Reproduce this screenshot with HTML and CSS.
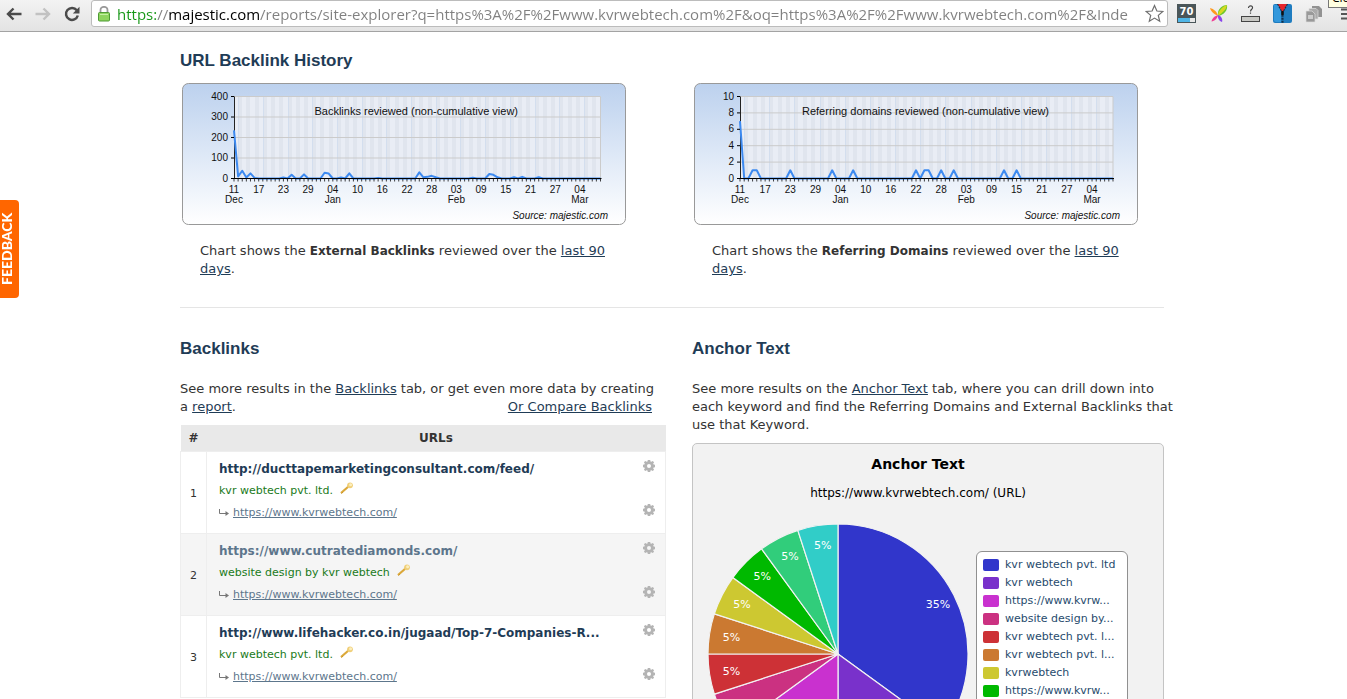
FILE: index.html
```html
<!DOCTYPE html>
<html lang="en">
<head>
<meta charset="utf-8">
<title>Site Explorer - Majestic</title>
<link rel="stylesheet" href="styles.css">
</head>
<body>
<svg class="defs" aria-hidden="true">
  <symbol id="gear" viewBox="0 0 12 12">
    <path fill="#b4b4b4" fill-rule="evenodd" d="M4.800 0h2.400l.3 1.400.9.400L9.700.9 11.100 2.300l-.9 1.300.4.900 1.400.3v2.400l-1.400.3-.4.900.9 1.300-1.400 1.400-1.300-.9-.9.400L7.200 12H4.800l-.3-1.400-.9-.4-1.300.9L.9 9.700l.9-1.300-.4-.9L0 7.200V4.800l1.400-.3.4-.9L.9 2.300 2.300.9l1.300.9.900-.4zM6 4a2 2 0 1 0 0 4 2 2 0 0 0 0-4z"/>
  </symbol>
  <symbol id="key" viewBox="0 0 14 12">
    <path d="M1 11 8.500 4.500" stroke="#dba83a" stroke-width="2.200"/>
    <path d="M1.500 11.500 3 10" stroke="#c9952c" stroke-width="1"/>
    <circle cx="10" cy="3.300" r="2.900" fill="#f0cf79"/>
    <circle cx="10.600" cy="2.800" r="1.500" fill="#fbeebd"/>
  </symbol>
  <symbol id="hook" viewBox="0 0 10 8">
    <path d="M.5 0v4.500H7" fill="none" stroke="#777"/>
    <path d="M6.500 2 10 4.500 6.500 7z" fill="#777"/>
  </symbol>
</svg>

<header class="toolbar">
  <nav class="nav">
    <button class="icon-btn" aria-label="Back"><svg width="16" height="14" viewBox="0 0 16 14"><path d="M15.500 7H2.500M7.500 1.500 2 7l5.500 5.500" fill="none" stroke="#4b4b4b" stroke-width="2.400"/></svg></button>
    <button class="icon-btn" aria-label="Forward"><svg width="16" height="14" viewBox="0 0 16 14"><path d="M.5 7h13M8.500 1.500 14 7l-5.500 5.500" fill="none" stroke="#c2c2c2" stroke-width="2.400"/></svg></button>
    <button class="icon-btn" aria-label="Reload"><svg width="16" height="16" viewBox="0 0 16 16"><path d="M12.800 4.300A6 6 0 1 0 13.800 9.500" fill="none" stroke="#4b4b4b" stroke-width="2.500"/><path d="M15.500.8V7.500H8.800z" fill="#4b4b4b"/></svg></button>
  </nav>
  <div class="omnibox">
    <svg width="12" height="16" viewBox="0 0 12 16"><path d="M2.500 8V4a3.500 3.200 0 0 1 7 0v4" fill="none" stroke="#999" stroke-width="1.800"/><rect x=".5" y="6.500" width="11" height="8.500" rx="1" fill="#8ed45e" stroke="#4f9b35"/><path d="M2 8.500h8" stroke="#c5f0a5"/></svg>
    <input class="url" type="text" aria-label="Address" value="https://majestic.com/reports/site-explorer?q=https%3A%2F%2Fwww.kvrwebtech.com%2F&amp;oq=https%3A%2F%2Fwww.kvrwebtech.com%2F&amp;Inde">
    <button class="icon-btn" aria-label="Bookmark this page"><svg width="19" height="19" viewBox="0 0 19 19"><path d="m9.500 1.500 2.400 5.500 5.900.5-4.500 3.900 1.400 5.800-5.200-3.100-5.200 3.100 1.400-5.800L1.200 7.500l5.900-.5z" fill="#fff" stroke="#6e6e6e" stroke-width="1.200"/></svg></button>
  </div>
  <div class="extensions">
    <button class="icon-btn score" aria-label="Score 70"><span>70</span></button>
    <button class="icon-btn" aria-label="Colour tool"><svg width="19" height="19" viewBox="0 0 19 19"><path d="M9 12C8 5 13 1 18 1c1 5-3 10-9 11z" fill="#6cc72c"/><path d="M9 12C9 7 13 3 18 1c-1 5-5 8-9 11z" fill="#d8d820"/><path d="M9 11.500C6 11 2 8 1 4c4 1 7 4 8 7.500z" fill="#ff9a1e"/><path d="M9 11c-3 1-6 3-6.500 6.500 3-.5 6-3 6.500-6.500z" fill="#f13c93"/><path d="M9 11c3 1 5 4 4 7-3-1-4.500-4-4-7z" fill="#8a46ec"/></svg></button>
    <button class="icon-btn" aria-label="Page rank"><svg width="19" height="17" viewBox="0 0 19 17"><path d="M7.500 3C7.500 0 12 .3 11.500 3 11.300 4.200 9.500 4.500 9.500 6.500M9.500 7.500v1.300" fill="none" stroke="#444" stroke-width="1.200"/><rect x=".5" y="11.500" width="18" height="5" fill="#c8c8c4" stroke="#444"/></svg></button>
    <button class="icon-btn" aria-label="Zip tool"><svg width="19" height="19" viewBox="0 0 19 19"><rect width="19" height="19" rx="2" fill="#1e7cc0"/><path d="M1 1h7v17H3a2 2 0 0 1-2-2z" fill="#3398dc"/><path d="M4.500 0h10L10.500 7h-2z" fill="#e5252c"/><path d="M4.500 0 9 8V19M14.500 0 10 8V19" fill="none" stroke="#12304a" stroke-width="1.100" stroke-dasharray="2 1"/><path d="M8.300 7h2.400v4H8.300z" fill="#111"/></svg></button>
    <button class="icon-btn" aria-label="Copy tool"><svg width="18" height="18" viewBox="0 0 18 18"><path d="M7 1h7l3 3v8H7z" fill="#929292"/><path d="M4 3.500h7l2 2V14H4z" fill="#aaa" stroke="#ddd" stroke-width=".7"/><path d="M1 6h6l3 3v8H1z" fill="#999" stroke="#ddd" stroke-width=".7"/><path d="M3 10h5v4H3z" fill="#ccc"/></svg></button>
    <button class="icon-btn menu" aria-label="Menu"><svg width="14" height="12" viewBox="0 0 14 12"><path d="M0 1.500h14M0 6h14M0 10.500h14" stroke="#555" stroke-width="2"/></svg></button>
  </div>
  <span class="tooltip">Close</span>
</header>

<button class="feedback">FEEDBACK</button>

<main class="viewport">
  <div class="page">
    <section class="history">
      <h2>URL Backlink History</h2>
      <div class="columns">
        <figure>
          <svg class="chart" id="backlinks-chart" viewBox="0 0 444 142" role="img" aria-label="Backlinks reviewed"></svg>
          <figcaption>Chart shows the <b>External Backlinks</b> reviewed over the <a href="#">last 90 days</a>.</figcaption>
        </figure>
        <figure>
          <svg class="chart" id="domains-chart" viewBox="0 0 444 142" role="img" aria-label="Referring domains reviewed"></svg>
          <figcaption>Chart shows the <b>Referring Domains</b> reviewed over the <a href="#">last 90 days</a>.</figcaption>
        </figure>
      </div>
    </section>

    <div class="columns lower">
      <section>
        <h2>Backlinks</h2>
        <p class="intro">See more results in the <a href="#">Backlinks</a> tab, or get even more data by creating a <a href="#">report</a>. <a class="compare" href="#">Or Compare Backlinks</a></p>
        <table class="links">
          <thead><tr><th class="num">#</th><th>URLs</th></tr></thead>
          <tbody>
            <tr><td class="num">1</td><td><div class="cell"><div class="entry"><a class="source" href="#">http://ducttapemarketingconsultant.com/feed/</a><span class="anchor">kvr webtech pvt. ltd. <svg class="key"><use href="#key"/></svg></span><span class="target"><svg class="hook"><use href="#hook"/></svg><a href="#">https://www.kvrwebtech.com/</a></span></div><div class="tools"><button class="icon-btn" aria-label="Source options"><svg class="gear"><use href="#gear"/></svg></button><button class="icon-btn" aria-label="Target options"><svg class="gear"><use href="#gear"/></svg></button></div></div></td></tr>
            <tr><td class="num">2</td><td><div class="cell"><div class="entry"><a class="source visited" href="#">https://www.cutratediamonds.com/</a><span class="anchor">website design by kvr webtech <svg class="key"><use href="#key"/></svg></span><span class="target"><svg class="hook"><use href="#hook"/></svg><a href="#">https://www.kvrwebtech.com/</a></span></div><div class="tools"><button class="icon-btn" aria-label="Source options"><svg class="gear"><use href="#gear"/></svg></button><button class="icon-btn" aria-label="Target options"><svg class="gear"><use href="#gear"/></svg></button></div></div></td></tr>
            <tr><td class="num">3</td><td><div class="cell"><div class="entry"><a class="source" href="#">http://www.lifehacker.co.in/jugaad/Top-7-Companies-R...</a><span class="anchor">kvr webtech pvt. ltd. <svg class="key"><use href="#key"/></svg></span><span class="target"><svg class="hook"><use href="#hook"/></svg><a href="#">https://www.kvrwebtech.com/</a></span></div><div class="tools"><button class="icon-btn" aria-label="Source options"><svg class="gear"><use href="#gear"/></svg></button><button class="icon-btn" aria-label="Target options"><svg class="gear"><use href="#gear"/></svg></button></div></div></td></tr>
          </tbody>
        </table>
      </section>

      <section>
        <h2>Anchor Text</h2>
        <p class="intro wide">See more results on the <a href="#">Anchor Text</a> tab, where you can drill down into each keyword and find the Referring Domains and External Backlinks that use that Keyword.</p>
        <div class="pie-card">
          <div class="pie-head">
            <h3>Anchor Text</h3>
            <p class="subtitle">https://www.kvrwebtech.com/ (URL)</p>
          </div>
          <div class="pie-row">
            <svg id="pie" width="260" height="260" viewBox="-130 -130 260 260" role="img" aria-label="Anchor text share"></svg>
            <ul class="legend" id="legend"></ul>
          </div>
        </div>
      </section>
    </div>
  </div>
</main>
<script src="charts.js"></script>
</body>
</html>
```

FILE: charts.js
```js
const NS = "http://www.w3.org/2000/svg";

function add(parent, name, attrs, text) {
  const node = document.createElementNS(NS, name);
  for (const key in attrs) node.setAttribute(key, attrs[key]);
  if (text) node.textContent = text;
  parent.appendChild(node);
  return node;
}

function drawHistory(id, o) {
  const svg = document.getElementById(id);
  const top = 13.5, bottom = 95.5, days = 89;
  const x = d => o.left + d * (o.right - o.left) / days;
  const y = v => bottom - v * (bottom - top) / o.max;
  const grad = add(add(svg, "defs", {}), "linearGradient", { id: id + "-bg", x1: 0, y1: 0, x2: 0, y2: 1 });
  add(grad, "stop", { offset: "0", "stop-color": "#bcd1ee" });
  add(grad, "stop", { offset: "1", "stop-color": "#ffffff" });
  add(svg, "rect", { x: .5, y: .5, width: 443, height: 141, rx: 6, fill: `url(#${id}-bg)`, stroke: "#999" });
  add(svg, "rect", { x: o.left, y: top, width: o.right - o.left, height: bottom - top, fill: "#e9edf5" });
  for (let d = 0; d < days - 1; d += 2) {
    const left = Math.round(x(d + 1));
    add(svg, "rect", { x: left, y: top, width: 4, height: bottom - top, fill: "#e0e5ee" });
    if (d % 6 === 0) add(svg, "rect", { x: left, y: top, width: 1, height: bottom - top, fill: "#d3deee" });
  }
  for (let v = o.step; v <= o.max; v += o.step) {
    add(svg, "path", { d: `M${o.left} ${y(v)}H${o.right}`, stroke: "#cbcbcb" });
  }
  add(svg, "path", { d: `M${o.right} ${top}V${bottom}`, stroke: "#cbcbcb" });
  add(svg, "path", { d: `M${o.left + .5} ${top}V${bottom}`, stroke: "#222" });
  let line = "";
  for (let d = 0; d <= days; d++) line += (d ? "L" : "M") + x(d) + " " + y(o.data[d] || 0);
  add(svg, "path", { d: line, fill: "none", stroke: "#3d8af0", "stroke-width": 2, "stroke-linejoin": "round" });
  add(svg, "path", { d: `M${o.left - 3} ${bottom}H${o.right + 1}`, stroke: "#000" });
  for (let d = 0; d <= days; d++) add(svg, "path", { d: `M${x(d)} ${bottom}v3`, stroke: "#111", "stroke-width": .8 });
  for (let v = 0; v <= o.max; v += o.step) {
    add(svg, "path", { d: `M${o.left - 3} ${y(v)}h3`, stroke: "#000" });
    add(svg, "text", { x: o.left - 6, y: y(v) + 3, class: "tick end" }, String(v));
  }
  "11 17 23 29 04 10 16 22 28 03 09 15 21 27 04".split(" ").forEach((label, i) =>
    add(svg, "text", { x: x(i * 6), y: 110, class: "tick mid" }, label));
  [["Dec", 0], ["Jan", 24], ["Feb", 54], ["Mar", 84]].forEach(m =>
    add(svg, "text", { x: x(m[1]), y: 120, class: "tick mid" }, m[0]));
  add(svg, "text", { x: (o.left + o.right) / 2 - 1, y: 32, class: "chart-title" }, o.title);
  add(svg, "text", { x: 426, y: 136, class: "source-note" }, "Source: majestic.com");
}

drawHistory("backlinks-chart", {
  left: 52, right: 418.5, max: 400, step: 100,
  title: "Backlinks reviewed (non-cumulative view)",
  data: { 0: 235, 1: 10, 2: 38, 3: 5, 4: 25, 5: 3, 12: 5, 14: 18, 17: 20, 22: 28, 23: 24, 26: 5, 28: 25, 35: 3, 45: 30, 46: 6, 47: 8, 48: 13, 49: 6, 58: 4, 62: 22, 63: 18, 64: 6, 68: 6, 70: 8, 74: 6 }
});
drawHistory("domains-chart", {
  left: 46, right: 419, max: 10, step: 2,
  title: "Referring domains reviewed (non-cumulative view)",
  data: { 0: 7, 3: 1, 4: 1, 12: 1, 22: 1, 27: 1, 42: 1, 44: 1, 45: 1, 48: 1, 51: 1, 63: 1, 66: 1 }
});

const slices = [
  ["kvr webtech pvt. ltd", 35, "#3136cb"],
  ["kvr webtech", 15, "#7931cb"],
  ["https://www.kvrw...", 15, "#c931cf"],
  ["website design by...", 5, "#cb3181"],
  ["kvr webtech pvt. l...", 5, "#cd3136"],
  ["kvr webtech pvt. l...", 5, "#cb7931"],
  ["kvrwebtech", 5, "#cdc831"],
  ["https://www.kvrw...", 5, "#00b900"],
  ["web design company", 5, "#31cd7b"],
  ["Other anchor text", 5, "#31cdc8"]
];
const pie = document.getElementById("pie");
const legend = document.getElementById("legend");
const point = (share, r) => {
  const a = share / 100 * 2 * Math.PI;
  return [Math.sin(a) * r, -Math.cos(a) * r];
};
let start = 0;
for (const [name, share, color] of slices) {
  const end = start + share;
  add(pie, "path", { d: `M0 0L${point(start, 130)}A130 130 0 0 1 ${point(end, 130)}Z`, fill: color, stroke: "#f2f2f2", "stroke-width": 1.2 });
  const [lx, ly] = point(start + share / 2, 110);
  add(pie, "text", { x: lx + 2, y: ly + 4, class: "slice-label" }, share + "%");
  start = end;
  const item = document.createElement("li");
  const swatch = document.createElement("span");
  swatch.className = "swatch";
  swatch.style.background = color;
  item.append(swatch, name);
  legend.append(item);
}
```

FILE: styles.css
```css
* { box-sizing: border-box; }
body {
  margin: 0;
  height: 100vh;
  display: flex;
  flex-direction: column;
  overflow: hidden;
  background: #fff;
  color: #333;
  font: 13px/18px "DejaVu Sans", Verdana, sans-serif;
}
a { color: #1f3c56; }
button { font: inherit; }
.defs { position: absolute; width: 0; height: 0; }
.icon-btn { display: flex; align-items: center; justify-content: center; padding: 0; border: 0; background: none; flex: none; }

.toolbar {
  position: relative;
  flex: none;
  display: flex;
  align-items: center;
  height: 32px;
  padding: 0 0 4px 6px;
  overflow: hidden;
  background: linear-gradient(#f3f3f3, #e3e3e3);
  border-bottom: 1px solid #a3a3a3;
}
.nav { display: flex; gap: 13px; padding-right: 11px; }
.omnibox {
  flex: 1;
  min-width: 0;
  display: flex;
  align-items: center;
  height: 27px;
  padding: 0 3px 0 6px;
  background: #fff;
  border: 1px solid #bcbcbc;
  border-radius: 3px;
}
.url {
  flex: 1;
  min-width: 0;
  height: 24px;
  margin-left: 7px;
  padding: 0;
  border: 0;
  outline: 0;
  font: 15px/24px "Open Sans", sans-serif;
  color: transparent;
  background: linear-gradient(to right, #149614 39px, #808080 39px 51px, #000 51px 143px, #808080 143px);
  -webkit-background-clip: text;
  background-clip: text;
}
.extensions { display: flex; align-items: center; gap: 13px; padding-left: 9px; margin-right: -8px; }
.menu { margin-left: 5px; }
.score {
  width: 19px;
  height: 19px;
  align-items: flex-start;
  background: linear-gradient(to right, #4fb5e6 0 12px, #e8e8e8 12px) 1px 14px / 17px 4px no-repeat #4a5659;
  color: #fff;
  font: bold 10px/15px "DejaVu Sans", sans-serif;
}
.tooltip {
  position: absolute;
  top: -12px;
  left: calc(100% - 19px);
  padding: 0 3px;
  background: #ffffe1;
  border: 1px solid #777;
  color: #000;
  font: 12px/18px "Open Sans", sans-serif;
}

.feedback {
  position: fixed;
  left: 0;
  top: 200px;
  width: 19px;
  height: 98px;
  padding: 0 0 0 4px;
  border: 0;
  border-radius: 4px 0 0 4px;
  background: #ff6600;
  color: #fff;
  font: 900 14px/14px Lato, sans-serif;
  writing-mode: vertical-rl;
  transform: rotate(180deg);
}

.viewport { flex: 1; min-height: 0; overflow: hidden; }
.page { max-width: 987px; margin: 0 auto; padding-right: 3px; }
h2 { margin: 0; color: #1f3c56; font: bold 17px/20px "Liberation Sans", Arial, sans-serif; }
.columns { display: grid; grid-template-columns: 486fr 472fr; column-gap: 26px; }
.history { padding: 19px 0 29px; border-bottom: 1px solid #e5e5e5; }
figure { margin: 0; padding: 12px 2px 0; }
.chart { display: block; width: 444px; max-width: 100%; }
figcaption { max-width: 444px; padding: 17px 0 0 18px; }
figcaption b { font-size: 12px; }
.chart text { font-family: "Liberation Sans", Arial, sans-serif; fill: #111; }
.chart .tick { font-size: 10px; }
.chart .end { text-anchor: end; }
.chart .mid { text-anchor: middle; }
.chart .chart-title { font-size: 11px; text-anchor: middle; }
.chart .source-note { font-size: 10px; font-style: italic; text-anchor: end; }

.lower { padding-top: 31px; }
.intro { margin: 0; padding: 21px 0 9px; }
.wide { margin-right: -14px; }
.compare { float: right; margin-right: 14px; }

.links { width: 100%; border-collapse: collapse; }
.links th { height: 26px; padding: 0; background: #e9e9e9; font-size: 12px; }
.links td { height: 82px; padding: 0; border: 1px solid #eee; vertical-align: top; }
.links tbody tr:nth-child(even) { background: #f5f5f5; }
.links .num { width: 26px; text-align: center; vertical-align: middle; }
.links td.num { padding-top: 3px; font-size: 11px; }
.cell { display: flex; justify-content: space-between; padding: 8px 10px 0 12px; }
.entry { display: flex; flex-direction: column; gap: 4px; font-size: 11px; }
.source { font-size: 12px; font-weight: bold; text-decoration: none; }
.visited, .target a { color: #5d768c; }
.anchor { color: #1a7a1a; }
.target { display: flex; align-items: center; gap: 4px; }
.key { width: 14px; height: 12px; margin-left: 4px; }
.hook { width: 10px; height: 8px; }
.tools { display: flex; flex-direction: column; gap: 32px; }
.gear { width: 12px; height: 12px; }

.pie-card { padding: 10px 15px; background: #f2f2f2; border: 1px solid #c4c4c4; border-radius: 5px; color: #000; }
.pie-head { padding-right: 20px; text-align: center; }
.pie-card h3 { margin: 0; font: bold 14px/20px "DejaVu Sans", sans-serif; }
.subtitle { margin: 0; padding: 10px 0 22px; font-size: 12px; }
.pie-row { display: flex; gap: 8px; }
#pie { flex: none; }
.slice-label { fill: #fff; font-size: 11px; text-anchor: middle; }
.legend { flex: none; align-self: flex-start; width: 152px; margin: 27px 0 0; padding: 4px 6px; list-style: none; background: #fff; border: 1px solid #909090; border-radius: 6px; color: #274b6d; font-size: 11px; }
.legend li { display: flex; align-items: center; gap: 6px; height: 18px; white-space: nowrap; }
.swatch { width: 16px; height: 12px; border-radius: 2px; }
```
